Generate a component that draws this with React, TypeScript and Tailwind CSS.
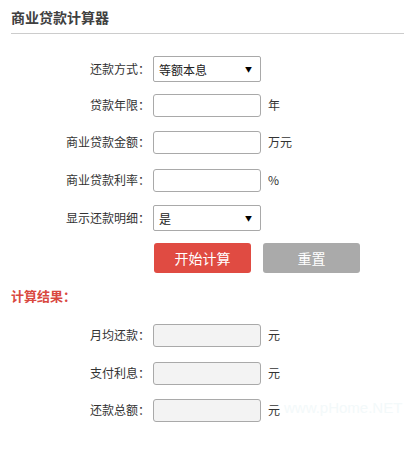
const font = { fontFamily: '"Microsoft YaHei", "Noto Sans CJK SC", sans-serif' };

const Label = ({ text }: { text: string }) => (
  <span className="w-[150px] shrink-0 text-right text-[12px] text-[#333]">{text}</span>
);

const TextRow = ({ label, unit, mt, readOnly }: { label: string; unit: string; mt: string; readOnly?: boolean }) => (
  <div className={`flex items-center h-[24px] ${mt}`}>
    <Label text={label} />
    <input
      readOnly={readOnly}
      className={`ml-[3px] w-[108px] h-[23px] border border-[#a9a9a9] rounded-[3px] outline-none px-1 text-[12px] ${
        readOnly ? 'bg-[#f3f3f3]' : 'bg-white'
      }`}
    />
    <span className="ml-[7px] text-[12px] text-[#333]">{unit}</span>
  </div>
);

const SelectRow = ({ label, value, mt }: { label: string; value: string; mt: string }) => (
  <div className={`flex items-center h-[26px] ${mt}`}>
    <Label text={label} />
    <div className="ml-[3px] w-[108px] h-[26px] border border-[#a9a9a9] rounded-[2px] bg-white flex items-center justify-between pl-[5px] pr-[8px]">
      <span className="text-[12px] text-[#222] mt-[1px]">{value}</span>
      <span className="text-[7px] text-black">▼</span>
    </div>
  </div>
);

export default function App() {
  return (
    <div className="w-[415px] h-[450px] bg-white relative" style={font}>
      <div className="px-[11px] pt-[7px]">
        <h1 className="text-[14px] font-bold text-[#404040] leading-[20px]">商业贷款计算器</h1>
        <div className="mt-[6px] h-px bg-[#cccccc]" />
      </div>

      <div className="flex flex-col">
        <SelectRow label="还款方式：" value="等额本息" mt="mt-[22px]" />
        <TextRow label="贷款年限：" unit="年" mt="mt-[11px]" />
        <TextRow label="商业贷款金额：" unit="万元" mt="mt-[13px]" />
        <TextRow label="商业贷款利率：" unit="%" mt="mt-[14px]" />
        <SelectRow label="显示还款明细：" value="是" mt="mt-[13px]" />
        <div className="flex mt-[12px] pl-[154px] gap-[12px]">
          <button className="w-[97px] h-[30px] rounded-[3px] bg-[#e04b42] text-white text-[14px]">开始计算</button>
          <button className="w-[97px] h-[30px] rounded-[3px] bg-[#aaaaaa] text-white text-[14px]">重置</button>
        </div>
      </div>

      <div className="px-[11px] mt-[14px]">
        <h2 className="text-[13px] font-bold text-[#d9483f] leading-[18px]">计算结果：</h2>
      </div>

      <div className="flex flex-col">
        <TextRow label="月均还款：" unit="元" mt="mt-[18px]" readOnly />
        <TextRow label="支付利息：" unit="元" mt="mt-[14px]" readOnly />
        <TextRow label="还款总额：" unit="元" mt="mt-[13px]" readOnly />
      </div>

      <span
        className="absolute left-[284px] top-[397px] text-[15px] text-[#f3f9fa]"
        style={{ fontFamily: '"Liberation Sans", Arial, sans-serif' }}
      >
        www.pHome.NET
      </span>
    </div>
  );
}
